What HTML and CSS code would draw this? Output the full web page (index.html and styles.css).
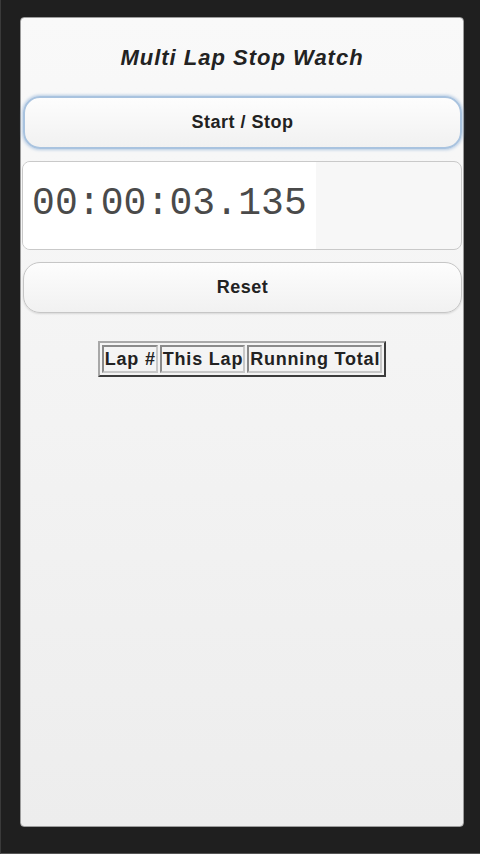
FILE: index.html
```html
<!DOCTYPE html>
<html>
<head>
<meta charset="utf-8">
<link rel="stylesheet" href="styles.css">
</head>
<body>
<div class="frame">
  <div class="panel">
    <h1 class="title">Multi Lap Stop Watch</h1>
    <button class="btn btn-focus">Start / Stop</button>
    <div class="display">
      <div class="display-field">00:00:03.135</div>
      <div class="display-rest"></div>
    </div>
    <button class="btn btn-reset">Reset</button>
    <div class="laps">
      <table class="lap-table">
        <tr>
          <th>Lap #</th>
          <th>This Lap</th>
          <th>Running Total</th>
        </tr>
      </table>
    </div>
  </div>
</div>
</body>
</html>
```

FILE: styles.css
```css
html, body {
  margin: 0;
  padding: 0;
  background: #1f1f1f;
}
.frame {
  width: 480px;
  height: 854px;
  box-sizing: border-box;
  padding: 17px 16px 27px 19px;
  border-left: 1px solid #3a3a3a;
  border-bottom: 1px solid #555;
}
.panel {
  height: 810px;
  box-sizing: border-box;
  border: 1px solid #9c9c9c;
  border-radius: 4px;
  background: linear-gradient(#f9f9f9, #ededed);
  display: flex;
  flex-direction: column;
  align-items: stretch;
  padding: 0 1px 0 1px;
  font-family: "Liberation Sans", Arial, sans-serif;
  color: #222;
}
.title {
  margin: 0;
  height: 78px;
  line-height: 80px;
  font-size: 22px;
  font-style: italic;
  font-weight: bold;
  letter-spacing: 1px;
  text-align: center;
}
.btn {
  display: block;
  margin: 0 0 0 1px;
  height: 53px;
  border: 1px solid #c6c6c6;
  border-radius: 17px;
  background: linear-gradient(#fdfdfd, #f1f1f1);
  font-family: "Liberation Sans", Arial, sans-serif;
  font-weight: bold;
  font-size: 18px;
  letter-spacing: 0.5px;
  color: #222;
  box-shadow: 0 1px 2px rgba(0,0,0,0.12);
  padding: 0;
}
.btn-focus {
  border: 2px solid #a9c3df;
  box-shadow: 0 0 3px 1px rgba(140,175,215,0.6);
}
.btn-reset {
  height: 51px;
}
.display {
  margin: 12px 0 12px 0;
  height: 89px;
  box-sizing: border-box;
  border: 1px solid #c9c9c9;
  border-radius: 8px;
  background: #f7f7f7;
  display: flex;
  overflow: hidden;
}
.display-field {
  width: 293px;
  background: #fff;
  font-family: "Liberation Mono", "Courier New", monospace;
  font-size: 38px;
  line-height: 84px;
  color: #4a4a4a;
  padding-left: 9px;
  box-sizing: border-box;
  font-weight: normal;
  letter-spacing: 0.1px;
}
.display-rest {
  flex: 1;
}
.laps {
  display: flex;
  justify-content: center;
  padding-top: 28px;
}
.lap-table {
  border-collapse: separate;
  border-spacing: 2px;
  border: 2px solid;
  border-color: #a8a8a8 #3c3c3c #3c3c3c #a8a8a8;
}
.lap-table th {
  border: 2px solid;
  border-color: #8a8a8a #c8c8c8 #c8c8c8 #8a8a8a;
  padding: 0 0 0 1px;
  font-size: 18px;
  font-weight: bold;
  line-height: 24px;
  letter-spacing: 0.8px;
  color: #222;
}
```
